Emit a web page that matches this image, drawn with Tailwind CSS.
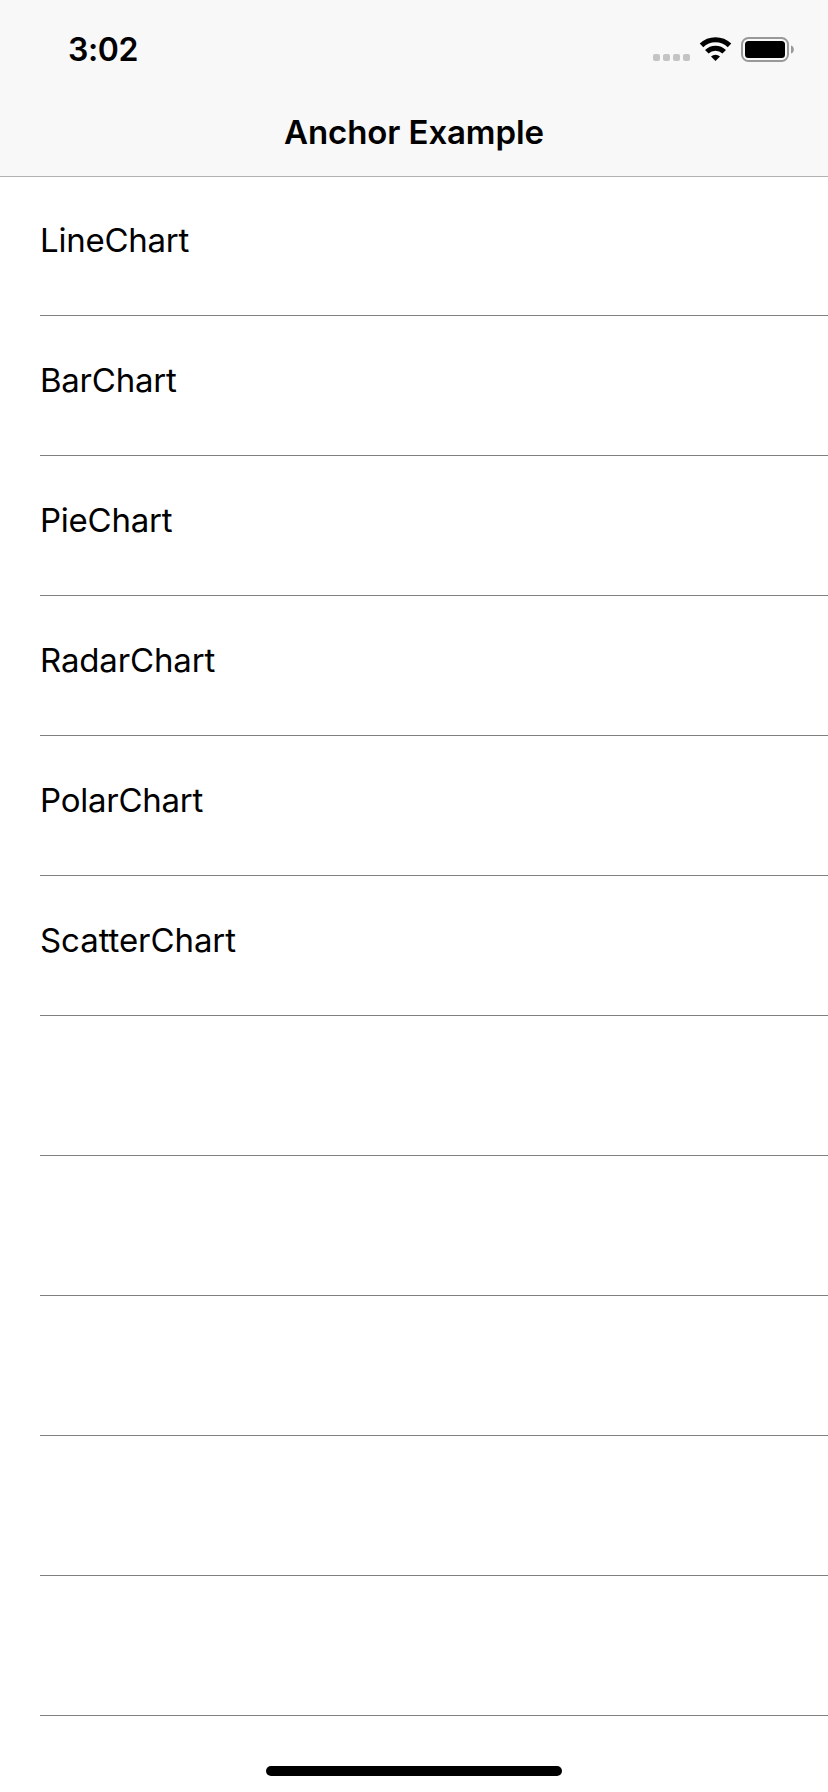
<!DOCTYPE html>
<html lang="en"><head><meta charset="utf-8"><title>Anchor Example</title>
<script src="https://cdn.jsdelivr.net/npm/@tailwindcss/browser@4"></script></head>
<body class="bg-white text-black font-['Inter',sans-serif] w-[828px] h-[1792px] overflow-hidden flex flex-col">
<header class="bg-[#f8f8f8] h-[177px] shrink-0 border-b border-[#b2b2b2] flex flex-col">
<div class="h-[88px] flex items-start justify-between pl-[68px] pr-[33px]">
<span class="text-[32px] font-semibold leading-[40px] mt-[30px] tracking-[-0.4px]">3:02</span>
<svg class="mt-[30px]" width="145" height="40" viewBox="650 30 145 40">
<g fill="#c4c4c4"><rect x="653" y="54" width="7" height="7" rx="2"/><rect x="663" y="54" width="7" height="7" rx="2"/><rect x="673" y="54" width="7" height="7" rx="2"/><rect x="683" y="54" width="7" height="7" rx="2"/></g>
<g fill="none" stroke="#000" stroke-width="5"><path d="M701.500 45.400a20 20 0 0 1 28 0"/><path d="M706.800 51.800a12.400 12.400 0 0 1 17.400 0"/></g><path d="M715.500 61l-4.500-4.600a6.600 6.600 0 0 1 9 0z"/>
<rect x="742" y="38" width="46" height="23" rx="6.500" fill="none" stroke="#999" stroke-width="2"/><rect x="745" y="41" width="40" height="17" rx="3.500"/><path d="M791 45.500c3.800 1 3.800 7 0 8z" fill="#999"/></svg>
</div>
<h1 class="text-center text-[33px] font-semibold leading-[40px] mt-[24px] tracking-[-0.1px]">Anchor Example</h1>
</header>
<main class="pl-[40px] text-[33px] leading-[40px] tracking-[-0.25px]">
<div class="h-[139px] border-b border-[#808080] pt-[43px]">LineChart</div>
<div class="h-[140px] border-b border-[#808080] pt-[44px]">BarChart</div>
<div class="h-[140px] border-b border-[#808080] pt-[44px]">PieChart</div>
<div class="h-[140px] border-b border-[#808080] pt-[44px] tracking-[-0.15px]">RadarChart</div>
<div class="h-[140px] border-b border-[#808080] pt-[44px]">PolarChart</div>
<div class="h-[140px] border-b border-[#808080] pt-[44px] tracking-[-0.08px]">ScatterChart</div>
<div class="h-[140px] border-b border-[#808080]"></div>
<div class="h-[140px] border-b border-[#808080]"></div>
<div class="h-[140px] border-b border-[#808080]"></div>
<div class="h-[140px] border-b border-[#808080]"></div>
<div class="h-[140px] border-b border-[#808080]"></div>
</main>
<div class="mt-auto mb-[16px] mx-auto w-[296px] h-[10px] rounded-full bg-black"></div>
</body></html>
